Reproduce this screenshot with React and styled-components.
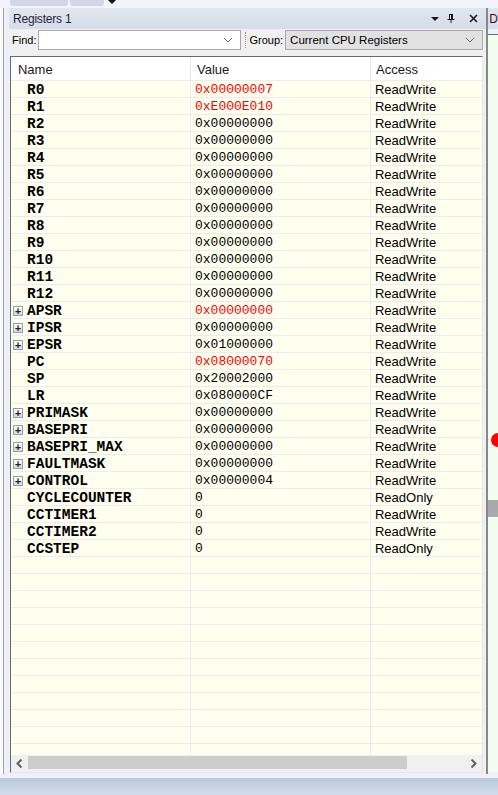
import React from 'react';
import styled, { createGlobalStyle } from 'styled-components';

const GlobalStyle = createGlobalStyle`
  html, body {
    margin: 0;
    padding: 0;
    background: #eef0fa;
  }
  * {
    box-sizing: border-box;
  }
`;

const registers = [
  { name: 'R0', value: '0x00000007', changed: true },
  { name: 'R1', value: '0xE000E010', changed: true },
  { name: 'R2', value: '0x00000000' },
  { name: 'R3', value: '0x00000000' },
  { name: 'R4', value: '0x00000000' },
  { name: 'R5', value: '0x00000000' },
  { name: 'R6', value: '0x00000000' },
  { name: 'R7', value: '0x00000000' },
  { name: 'R8', value: '0x00000000' },
  { name: 'R9', value: '0x00000000' },
  { name: 'R10', value: '0x00000000' },
  { name: 'R11', value: '0x00000000' },
  { name: 'R12', value: '0x00000000' },
  { name: 'APSR', value: '0x00000000', changed: true, group: true },
  { name: 'IPSR', value: '0x00000000', group: true },
  { name: 'EPSR', value: '0x01000000', group: true },
  { name: 'PC', value: '0x08000070', changed: true },
  { name: 'SP', value: '0x20002000' },
  { name: 'LR', value: '0x080000CF' },
  { name: 'PRIMASK', value: '0x00000000', group: true },
  { name: 'BASEPRI', value: '0x00000000', group: true },
  { name: 'BASEPRI_MAX', value: '0x00000000', group: true },
  { name: 'FAULTMASK', value: '0x00000000', group: true },
  { name: 'CONTROL', value: '0x00000004', group: true },
  { name: 'CYCLECOUNTER', value: '0', access: 'ReadOnly' },
  { name: 'CCTIMER1', value: '0' },
  { name: 'CCTIMER2', value: '0' },
  { name: 'CCSTEP', value: '0', access: 'ReadOnly' },
];

const EMPTY_ROWS = 14;

const Chevron = ({ color = '#606060' }) => (
  <svg width="10" height="6" viewBox="0 0 10 6">
    <path d="M1 1 L5 5 L9 1" fill="none" stroke={color} strokeWidth="1" />
  </svg>
);

const App = () => {
  return (
    <>
      <GlobalStyle />
      <Page>
        <TopStrip>
          <TopTab $width={58} />
          <TopTab $width={34} />
          <svg width="8" height="6" viewBox="0 0 8 6">
            <path d="M0 0 L8 0 L4 4 Z" fill="#111" />
          </svg>
        </TopStrip>

        <Middle>
          <LeftEdge />

          <Panel>
            <TitleBar>
              <Title>Registers 1</Title>
              <TitleButtons>
                <svg width="8" height="6" viewBox="0 0 8 6">
                  <path d="M0 1 L8 1 L4 5 Z" fill="#1a1a1a" />
                </svg>
                <svg width="8" height="9" viewBox="0 0 8 9">
                  <path d="M2 0.5 H6 M2.5 0.5 V5 M5.5 0.5 V5 M0.5 5.5 H7.5 M4 5.5 V9" fill="none" stroke="#1a1a1a" strokeWidth="1" />
                  <path d="M4.5 1 V5" stroke="#1a1a1a" strokeWidth="1" />
                </svg>
                <svg width="9" height="9" viewBox="0 0 9 9">
                  <path d="M1 1 L8 8 M8 1 L1 8" fill="none" stroke="#1a1a1a" strokeWidth="1.6" />
                </svg>
              </TitleButtons>
            </TitleBar>

            <FindBar>
              <Label>Find:</Label>
              <Combo $width={203} $bg="#ffffff">
                <ComboText />
                <Chevron />
              </Combo>
              <Separator />
              <Label>Group:</Label>
              <Combo $width={198} $bg="#e1e1e1">
                <ComboText>Current CPU Registers</ComboText>
                <Chevron color="#707070" />
              </Combo>
            </FindBar>

            <GridBox>
              <HeaderRow>
                <HeaderCell>Name</HeaderCell>
                <HeaderCell>Value</HeaderCell>
                <HeaderCell>Access</HeaderCell>
              </HeaderRow>

              <Body>
                {registers.map((r) => (
                  <Row key={r.name}>
                    <NameCell>
                      <ExpandSlot>{r.group && <Expander>+</Expander>}</ExpandSlot>
                      <RegName>{r.name}</RegName>
                    </NameCell>
                    <ValueCell $changed={r.changed}>{r.value}</ValueCell>
                    <AccessCell>{r.access || 'ReadWrite'}</AccessCell>
                  </Row>
                ))}
                {Array.from({ length: EMPTY_ROWS }).map((_, i) => (
                  <Row key={`e${i}`}>
                    <NameCell />
                    <ValueCell />
                    <AccessCell />
                  </Row>
                ))}
              </Body>

              <HScroll>
                <ScrollButton>
                  <svg width="7" height="9" viewBox="0 0 7 9">
                    <path d="M5.5 0.5 L1.5 4.5 L5.5 8.5" fill="none" stroke="#606060" strokeWidth="2" />
                  </svg>
                </ScrollButton>
                <ScrollThumb />
                <ScrollTrack />
                <ScrollButton>
                  <svg width="7" height="9" viewBox="0 0 7 9">
                    <path d="M1.5 0.5 L5.5 4.5 L1.5 8.5" fill="none" stroke="#606060" strokeWidth="2" />
                  </svg>
                </ScrollButton>
              </HScroll>
            </GridBox>
          </Panel>

          <RightPanel>
            <RightTitle>D</RightTitle>
            <RightContent>
              <Breakpoint />
              <GrayMark />
            </RightContent>
          </RightPanel>
        </Middle>

        <BottomStrip />
      </Page>
    </>
  );
};

const Page = styled.div`
  width: 498px;
  height: 795px;
  display: flex;
  flex-direction: column;
  background: #eef0fa;
  overflow: hidden;
  font-family: 'Liberation Sans', Arial, sans-serif;
`;

const TopStrip = styled.div`
  height: 8px;
  display: flex;
  align-items: flex-start;
  gap: 2px;
  padding-left: 10px;
  background: #f3f4fb;

  svg {
    margin-left: 2px;
  }
`;

const TopTab = styled.div`
  width: ${(p) => p.$width}px;
  height: 6px;
  background: #d3d6e6;
  border-radius: 0 0 3px 3px;
`;

const Middle = styled.div`
  flex: 1;
  display: flex;
  min-height: 0;
`;

const LeftEdge = styled.div`
  width: 9px;
  background: #eef0fa;
  border-left: 3px solid #fbfbfd;

  &::before {
    content: '';
    display: block;
    width: 1px;
    height: 100%;
    background: #a5a5a5;
  }
`;

const Panel = styled.div`
  width: 478px;
  display: flex;
  flex-direction: column;
  background: #f0f0f0;
`;

const TitleBar = styled.div`
  height: 21px;
  display: flex;
  align-items: center;
  justify-content: space-between;
  padding: 0 8px 0 4px;
  background: linear-gradient(#e2e6f0, #d6dce8);
`;

const Title = styled.span`
  font-size: 12px;
  color: #1e1e3c;
  letter-spacing: -0.2px;
`;

const TitleButtons = styled.div`
  display: flex;
  align-items: center;
  gap: 8px;

  svg:last-child {
    margin-left: 6px;
  }
`;

const FindBar = styled.div`
  height: 27px;
  display: flex;
  align-items: flex-start;
  padding: 1px 0 0 3px;
  gap: 2px;
`;

const Label = styled.span`
  font-size: 11px;
  color: #000;
  line-height: 20px;
`;

const Combo = styled.div`
  width: ${(p) => p.$width}px;
  height: 20px;
  display: flex;
  align-items: center;
  justify-content: space-between;
  padding: 0 7px 0 4px;
  background: ${(p) => p.$bg};
  border: 1px solid #a9a9a9;
`;

const ComboText = styled.span`
  font-size: 11.5px;
  color: #000;
`;

const Separator = styled.div`
  width: 1px;
  height: 16px;
  margin: 2px 1px 0 2px;
  border-left: 1px dotted #9a9a9a;
`;

const GridBox = styled.div`
  width: 473px;
  margin: 0 0 1px 1px;
  flex: 1;
  display: flex;
  flex-direction: column;
  min-height: 0;
  background: #fffff2;
  border-left: 1px solid #6a6a6a;
  border-top: 1px solid #6a6a6a;
  border-right: 1px solid #e6e6e6;
  border-bottom: 1px solid #e6e6e6;
`;

const columns = '180px 180px 1fr';

const HeaderRow = styled.div`
  height: 24px;
  display: grid;
  grid-template-columns: ${columns};
  background: #ffffff;
  border-bottom: 1px solid #ececec;
`;

const HeaderCell = styled.div`
  display: flex;
  align-items: center;
  padding-left: 7px;
  padding-top: 1px;
  font-size: 13px;
  color: #1a1a1a;
  border-right: 1px solid #e6e6e6;

  &:nth-child(2) {
    padding-left: 6px;
  }
  &:last-child {
    padding-left: 5px;
    border-right: none;
  }
`;

const Body = styled.div`
  flex: 1;
  min-height: 0;
  overflow: hidden;
`;

const Row = styled.div`
  height: 17px;
  display: grid;
  grid-template-columns: ${columns};
  border-bottom: 1px solid #ececec;
  background: #fffff0;
`;

const Cell = styled.div`
  display: flex;
  align-items: center;
  padding-top: 1px;
  overflow: hidden;
  white-space: nowrap;
  border-right: 1px solid #ececec;
`;

const NameCell = styled(Cell)`
  padding-left: 2px;
`;

const ExpandSlot = styled.div`
  width: 14px;
  display: flex;
  align-items: center;
`;

const Expander = styled.div`
  width: 10px;
  height: 10px;
  border: 1px solid #8f9fb5;
  background: linear-gradient(#ffffff, #d8d8d8);
  font-family: 'DejaVu Sans Mono', monospace;
  font-size: 10px;
  line-height: 8px;
  font-weight: bold;
  text-align: center;
  color: #222;
`;

const RegName = styled.span`
  font-family: 'Liberation Mono', 'Courier New', monospace;
  font-weight: bold;
  font-size: 14.5px;
  color: #000;
`;

const ValueCell = styled(Cell)`
  padding-left: 4px;
  font-family: 'Liberation Mono', 'Courier New', monospace;
  font-size: 13px;
  color: ${(p) => (p.$changed ? '#ff0000' : '#000')};
`;

const AccessCell = styled(Cell)`
  padding-left: 4px;
  font-size: 13px;
  color: #000;
  border-right: none;
`;

const HScroll = styled.div`
  height: 17px;
  display: flex;
  background: #f0f0f0;
`;

const ScrollButton = styled.div`
  width: 17px;
  display: flex;
  align-items: center;
  justify-content: center;
  background: #f0f0f0;
`;

const ScrollThumb = styled.div`
  width: 379px;
  background: #cdcdcd;
  margin: 1px 0 3px;
`;

const ScrollTrack = styled.div`
  flex: 1;
`;

const RightPanel = styled.div`
  flex: 1;
  display: flex;
  flex-direction: column;
  border-left: 2px solid #888888;
  background: #eef0fa;
`;

const RightTitle = styled.div`
  height: 21px;
  padding: 4px 0 0 1px;
  font-size: 12px;
  color: #3a1020;
  background: linear-gradient(#e2e6f0, #d6dce8);
`;

const RightContent = styled.div`
  flex: 1;
  margin-top: 5px;
  margin-bottom: 2px;
  background: #f2fcef;
  border-top: 1px solid #6a6a6a;
  position: relative;
  overflow: hidden;
`;

const Breakpoint = styled.div`
  position: absolute;
  left: 3px;
  top: 398px;
  width: 14px;
  height: 14px;
  border-radius: 50%;
  background: #ff0000;
`;

const GrayMark = styled.div`
  position: absolute;
  left: 0;
  top: 465px;
  width: 100%;
  height: 17px;
  background: #a9a9a9;
`;

const BottomStrip = styled.div`
  height: 21px;
  border-top: 4px solid #eef0fa;
  background: linear-gradient(#b9c9db, #d3dcea);
`;

export default App;
